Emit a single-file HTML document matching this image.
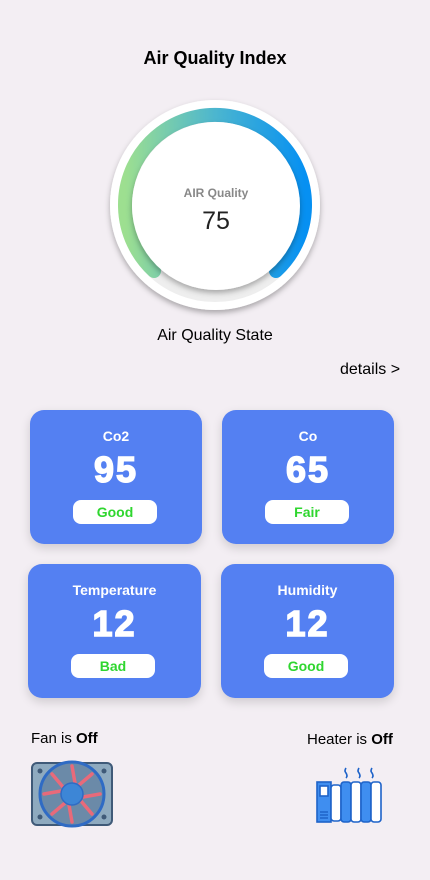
<!DOCTYPE html>
<html><head><style>
body{margin:0;width:430px;height:880px;background:#f3eef3;font-family:"Liberation Sans",sans-serif;position:relative;overflow:hidden}
.a{position:absolute}
.t{left:0;width:430px;text-align:center;top:48px;font-weight:bold;font-size:18px;color:#000}
.card{position:absolute;width:172px;height:134px;background:#5480f2;border-radius:14px;box-shadow:0 4px 10px rgba(0,0,0,.15);color:#fff;text-align:center}
.card .n{position:absolute;top:18px;left:0;right:0;font-weight:bold;font-size:14px}
.card .v{position:absolute;top:39px;left:0;right:0;font-weight:900;font-size:36px;letter-spacing:2px;-webkit-text-stroke:1.5px #fff}
.card .p{position:absolute;top:90px;left:43px;width:84px;height:24px;background:#fff;border-radius:8px;color:#2fd62f;font-weight:bold;font-size:14px;line-height:24px}
</style></head><body>
<div class="a t">Air Quality Index</div>
<svg class="a" style="left:100px;top:90px" width="230" height="230" viewBox="0 0 230 230">
<defs><linearGradient id="g" x1="0" x2="1"><stop offset="0" stop-color="#9ddf90"/><stop offset=".5" stop-color="#4cb6cf"/><stop offset="1" stop-color="#0690f2"/></linearGradient>
<filter id="s"><feDropShadow dx="0" dy="3" stdDeviation="3" flood-opacity=".3"/></filter></defs>
<circle cx="115" cy="115" r="105" fill="#fff" filter="url(#s)"/>
<circle cx="115" cy="115" r="90" fill="none" stroke="#eee" stroke-width="14"/>
<path d="M 54 181 A 90 90 0 1 1 176 181" fill="none" stroke="url(#g)" stroke-width="14" stroke-linecap="round"/>
<circle cx="116" cy="116" r="84" fill="#fff" filter="url(#s)"/>
<text x="116" y="107" text-anchor="middle" font-family="Liberation Sans" font-weight="bold" font-size="12" fill="#888">AIR Quality</text>
<text x="116" y="139" text-anchor="middle" font-family="Liberation Sans" font-size="25" fill="#222">75</text>
</svg>
<div class="a" style="left:0;width:430px;text-align:center;top:327px;font-size:16px">Air Quality State</div>
<div class="a" style="left:340px;top:361px;font-size:16px">details &gt;</div>
<div class="card" style="left:30px;top:410px"><div class="n">Co2</div><div class="v">95</div><div class="p">Good</div></div>
<div class="card" style="left:222px;top:410px"><div class="n">Co</div><div class="v">65</div><div class="p">Fair</div></div>
<div class="card" style="left:28px;top:564px;width:173px"><div class="n">Temperature</div><div class="v">12</div><div class="p">Bad</div></div>
<div class="card" style="left:221px;top:564px;width:173px"><div class="n">Humidity</div><div class="v">12</div><div class="p">Good</div></div>
<div class="a" style="left:31px;top:730px;font-size:15px">Fan is <b>Off</b></div>
<div class="a" style="left:307px;top:731px;font-size:15px">Heater is <b>Off</b></div>
<svg class="a" style="left:31px;top:760px" width="82" height="68" viewBox="0 0 82 68">
<rect x="1" y="3" width="80" height="62" rx="5" fill="#8eaabf" stroke="#3f5a78" stroke-width="2"/>
<circle cx="9" cy="11" r="2.5" fill="#3f5a78"/><circle cx="73" cy="11" r="2.5" fill="#3f5a78"/><circle cx="9" cy="57" r="2.5" fill="#3f5a78"/><circle cx="73" cy="57" r="2.5" fill="#3f5a78"/>
<circle cx="41" cy="34" r="32" fill="#6b8aa8" stroke="#2f6bc4" stroke-width="3"/>
<g stroke="#e86a7a" stroke-width="3.5" stroke-linecap="round">
<line x1="41" y1="6" x2="44" y2="23"/><line x1="41" y1="62" x2="38" y2="45"/><line x1="13" y1="34" x2="30" y2="31"/><line x1="69" y1="34" x2="52" y2="37"/>
<line x1="21" y1="14" x2="32" y2="27"/><line x1="61" y1="54" x2="50" y2="41"/><line x1="61" y1="14" x2="48" y2="25"/><line x1="21" y1="54" x2="34" y2="43"/></g>
<circle cx="41" cy="34" r="11" fill="#3d86d6" stroke="#2f6bc4" stroke-width="1.5"/>
</svg>
<svg class="a" style="left:316px;top:765px" width="68" height="60" viewBox="0 0 68 60">
<g fill="none" stroke="#1e63c9" stroke-width="1.6">
<path d="M30 3 q-2 3 0 5 q2 3 0 5"/><path d="M43 3 q-2 3 0 5 q2 3 0 5"/><path d="M56 3 q-2 3 0 5 q2 3 0 5"/>
<rect x="1" y="17" width="14" height="40" fill="#3f8ef0"/><rect x="4" y="21" width="8" height="10" fill="#fff"/>
<path d="M4 47h8M4 50h8M4 53h8"/>
<rect x="15" y="20" width="10" height="36" rx="3" fill="#fff"/><rect x="25" y="17" width="10" height="40" rx="3" fill="#3f8ef0"/>
<rect x="35" y="17" width="10" height="40" rx="3" fill="#fff"/><rect x="45" y="17" width="10" height="40" rx="3" fill="#3f8ef0"/><rect x="55" y="17" width="10" height="40" rx="3" fill="#fff"/>
</g></svg>
</body></html>
